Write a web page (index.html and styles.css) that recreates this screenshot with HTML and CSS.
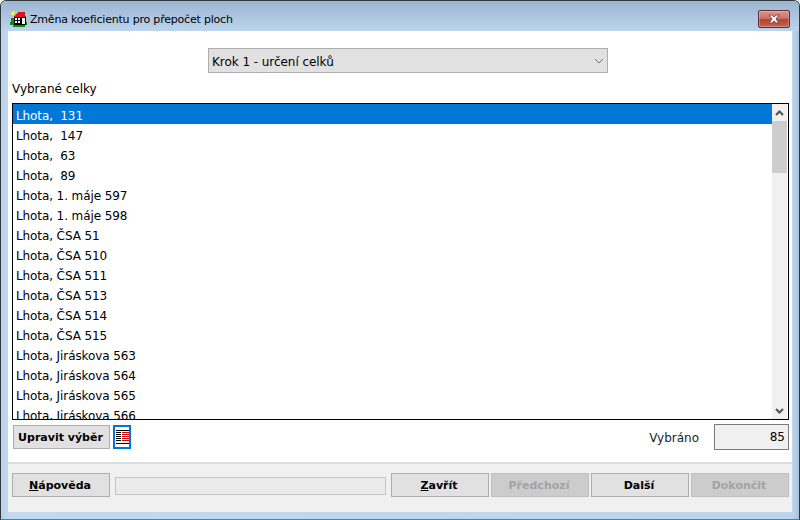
FILE: index.html
```html
<!DOCTYPE html>
<html lang="cs">
<head>
  <meta charset="UTF-8">
  <title>Změna koeficientu pro přepočet ploch</title>
  <link rel="stylesheet" href="styles.css">
</head>
<body>
  <div class="window">
    <div class="titlebar">
      <svg class="app-icon" width="18" height="18" viewBox="0 0 18 18" shape-rendering="crispEdges">
        <path d="M1 8 H16 V12 H17 V15 H15 V17 H3 V15 H0 V12 H1 Z" fill="#0a8a12"/>
        <path d="M1 2 H3 V1 H5 V3 H4 V5 H1 Z" fill="#ffe93a"/>
        <path d="M4 6 H5 V5 H6 V4 H7 V3 H8 V2 H15 V6 H16 V8 H4 Z" fill="#d81818"/>
        <path d="M4 7 H16 V15 H4 Z" fill="#000"/>
        <path d="M12 8 H15 V14 H12 Z" fill="#fff"/>
        <path d="M5 8 H7 V10 H5 Z M8 8 H10 V10 H8 Z M5 11 H7 V13 H5 Z M8 11 H10 V13 H8 Z" fill="#fff"/>
      </svg>
      <span class="title">Změna koeficientu pro přepočet ploch</span>
      <div class="close-btn">
        <svg width="14" height="10" viewBox="0 0 14 10">
          <path d="M2 1 H5 L7 3 L9 1 H12 L9 5 L12 9 H9 L7 7 L5 9 H2 L5 5 Z" fill="#f4f0f0" stroke="#6b3a3a" stroke-width="0.8"/>
        </svg>
      </div>
    </div>

    <div class="client">
      <div class="content">
        <div class="step-row">
          <div class="combo">
            <span class="combo-text">Krok 1 - určení celků</span>
            <svg width="10" height="6" viewBox="0 0 10 6">
              <path d="M1 1 L5 5 L9 1" fill="none" stroke="#707070" stroke-width="1"/>
            </svg>
          </div>
        </div>
        <div class="list-label">Vybrané celky</div>
        <div class="listbox">
          <ul class="items">
            <li class="selected">Lhota,&nbsp; 131</li>
            <li>Lhota,&nbsp; 147</li>
            <li>Lhota,&nbsp; 63</li>
            <li>Lhota,&nbsp; 89</li>
            <li>Lhota, 1. máje 597</li>
            <li>Lhota, 1. máje 598</li>
            <li>Lhota, ČSA 51</li>
            <li>Lhota, ČSA 510</li>
            <li>Lhota, ČSA 511</li>
            <li>Lhota, ČSA 513</li>
            <li>Lhota, ČSA 514</li>
            <li>Lhota, ČSA 515</li>
            <li>Lhota, Jiráskova 563</li>
            <li>Lhota, Jiráskova 564</li>
            <li>Lhota, Jiráskova 565</li>
            <li>Lhota, Jiráskova 566</li>
          </ul>
          <div class="scrollbar">
            <div class="arrow">
              <svg width="9" height="6" viewBox="0 0 9 6"><path d="M1 5 L4.500 1.500 L8 5" fill="none" stroke="#505050" stroke-width="2"/></svg>
            </div>
            <div class="thumb"></div>
            <div class="track"></div>
            <div class="arrow">
              <svg width="9" height="6" viewBox="0 0 9 6"><path d="M1 1 L4.500 4.500 L8 1" fill="none" stroke="#505050" stroke-width="2"/></svg>
            </div>
          </div>
        </div>
        <div class="tools-row">
          <button class="btn edit-btn">Upravit výběr</button>
          <div class="list-icon">
            <svg width="13" height="14" viewBox="0 0 13 14" shape-rendering="crispEdges">
              <path d="M0 0 H13 V1 H0 Z M0 13 H13 V14 H0 Z" fill="#000"/>
              <path d="M0 2 H5 V3 H0 Z M0 4 H5 V5 H0 Z M0 6 H5 V7 H0 Z M0 8 H5 V9 H0 Z M0 10 H5 V11 H0 Z" fill="#000"/>
              <path d="M6 2 H13 V3 H6 Z M6 4 H13 V5 H6 Z M6 6 H13 V7 H6 Z M6 8 H13 V9 H6 Z M6 10 H13 V11 H6 Z" fill="#d80000"/>
            </svg>
          </div>
          <span class="count-label">Vybráno</span>
          <div class="count">85</div>
        </div>
      </div>

      <div class="footer">
        <button class="btn"><u>N</u>ápověda</button>
        <div class="progress"></div>
        <button class="btn"><u>Z</u>avřít</button>
        <button class="btn" disabled>Předchozí</button>
        <button class="btn">Další</button>
        <button class="btn" disabled>Dokončit</button>
      </div>
    </div>
  </div>
</body>
</html>
```

FILE: styles.css
```css
html, body {
  margin: 0;
  padding: 0;
  background: #fff;
}
body {
  width: 800px;
  height: 520px;
  overflow: hidden;
  font-family: "DejaVu Sans", sans-serif;
  font-size: 12px;
  color: #000;
}

.window {
  box-sizing: border-box;
  width: 800px;
  height: 520px;
  display: flex;
  flex-direction: column;
  padding: 0 7px 0 8px;
  background: linear-gradient(to right, #b9d1ea, #c4d9ef 8px, #bcd4ec 792px, #a9c4df);
  border: 1px solid #2f3a40;
  border-bottom-color: #12a0b0;
  border-radius: 6px 6px 0 0;
}

.titlebar {
  height: 30px;
  flex: none;
  display: flex;
  align-items: center;
  margin: 0 -7px 0 -8px;
  padding: 0 9px 0 9px;
  background: linear-gradient(to bottom, #9db6d0, #bcd4ec);
  border-radius: 5px 5px 0 0;
}
.app-icon {
  flex: none;
  margin: 6px 2px 0 0;
}
.title {
  flex: 1;
  padding-top: 6px;
  font-size: 11px;
  letter-spacing: -0.2px;
}
.close-btn {
  width: 30px;
  height: 16px;
  margin-top: 6px;
  display: flex;
  align-items: center;
  justify-content: center;
  border: 1px solid #5a2f33;
  border-radius: 2px;
  background: linear-gradient(to bottom, #d9968c, #c9736a 45%, #b8402c 55%, #c46a58);
  box-shadow: inset 0 0 0 1px rgba(255, 255, 255, 0.25);
}

.client {
  flex: 1;
  display: flex;
  flex-direction: column;
  background: #fff;
  margin-left: -1px;
  margin-bottom: 7px;
}
.content {
  flex: 1;
  display: flex;
  flex-direction: column;
  padding: 0 3px 0 4px;
}

.step-row {
  display: flex;
  justify-content: center;
  padding: 17px 0 7px 15px;
}
.combo {
  box-sizing: border-box;
  width: 400px;
  height: 25px;
  display: flex;
  align-items: center;
  justify-content: space-between;
  padding: 0 3px;
  background: #e1e1e1;
  border: 1px solid #adadad;
}
.combo-text {
  padding-top: 2px;
  letter-spacing: -0.05px;
}

.list-label {
  height: 23px;
  line-height: 18px;
}

.listbox {
  box-sizing: border-box;
  height: 317px;
  display: flex;
  border: 1px solid #000;
  overflow: hidden;
}
.items {
  flex: 1;
  list-style: none;
  margin: 0;
  padding: 0;
  overflow: hidden;
}
.items li {
  height: 20px;
  line-height: 24px;
  padding-left: 3px;
  white-space: nowrap;
  letter-spacing: -0.1px;
}
.items .selected {
  background: #0078d7;
  color: #fff;
}

.scrollbar {
  width: 15px;
  display: flex;
  flex-direction: column;
  background: #f0f0f0;
  border-right: 1px solid #fff;
}
.arrow {
  height: 17px;
  display: flex;
  align-items: center;
  justify-content: center;
  flex: none;
}
.thumb {
  height: 52px;
  flex: none;
  background: #cdcdcd;
}
.track {
  flex: 1;
}

.tools-row {
  display: flex;
  align-items: center;
  padding: 4px 0 0 1px;
}
.btn {
  box-sizing: border-box;
  width: 98px;
  height: 24px;
  flex: none;
  padding: 0 2px 0 0;
  font-family: inherit;
  font-size: 11px;
  font-weight: bold;
  color: #000;
  background: #e1e1e1;
  border: 1px solid #adadad;
}
.btn:disabled {
  background: #cccccc;
  border-color: #bfbfbf;
  color: #a3a3a3;
}
.edit-btn {
  width: 97px;
  padding-top: 1px;
}
.list-icon {
  box-sizing: border-box;
  width: 18px;
  height: 24px;
  margin-left: 3px;
  display: flex;
  align-items: center;
  justify-content: center;
  background: #fff;
  border: 2px solid #0078d7;
}
.count-label {
  margin-left: auto;
  margin-right: 15px;
  padding-top: 2px;
  color: #222;
}
.count {
  box-sizing: border-box;
  width: 75px;
  height: 26px;
  line-height: 24px;
  padding-right: 3px;
  text-align: right;
  background: #f0f0f0;
  border: 1px solid #7a7a7a;
}

.footer {
  box-sizing: border-box;
  height: 50px;
  flex: none;
  display: flex;
  align-items: flex-start;
  gap: 2px;
  padding: 9px 3px 0 4px;
  background: #f0f0f0;
  border-top: 2px solid #dcdcdc;
}
.progress {
  box-sizing: border-box;
  width: 271px;
  height: 18px;
  margin: 4px 3px 0;
  background: #ebebeb;
  border: 1px solid #c4c4c4;
}
```
